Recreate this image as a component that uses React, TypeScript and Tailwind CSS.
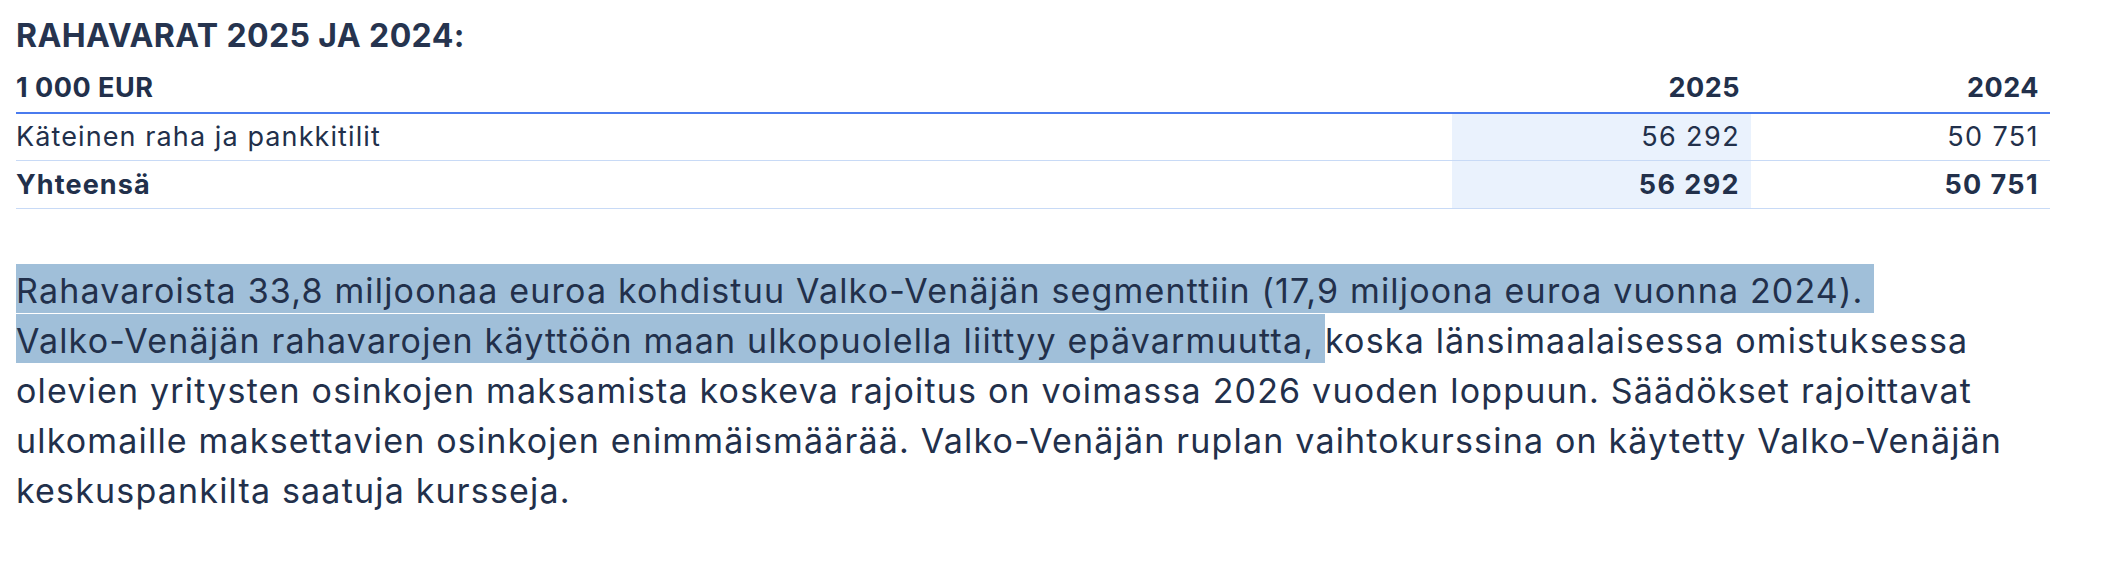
import React from "react";

const HL = "inline-block h-[49px] align-top bg-[#a0bfd9]";
const LINE = "block h-[50px] leading-[53px]";

export default function App() {
  return (
    <div className="w-[2108px] h-[568px] bg-white text-[#22304b] font-[Inter,'Noto_Sans',sans-serif] pl-4 pt-[18px]">
      <h2 className="text-[32px] leading-[36px] font-bold tracking-[0.4px] text-[#26344f]">
        RAHAVARAT 2025 JA 2024:
      </h2>
      <div className="w-[2034px] mt-[18px] tracking-[1.4px]">
        <div className="flex items-end border-b-2 border-[#4a7bee] pb-[8px] text-[27px] leading-[32px] font-bold tracking-[0.5px]">
          <div className="flex-1">1 000 EUR</div>
          <div className="w-[299px] text-right pr-[11px]">2025</div>
          <div className="w-[299px] text-right pr-[11px]">2024</div>
        </div>
        <div className="flex h-[47px] border-b border-[#c8daf6] text-[27px] leading-[46px]">
          <div className="flex-1 tracking-[1.1px]">Käteinen raha ja pankkitilit</div>
          <div className="w-[299px] text-right pr-[11px] bg-[#eaf2fd]">56 292</div>
          <div className="w-[299px] text-right pr-[11px]">50 751</div>
        </div>
        <div className="flex h-[48px] border-b border-[#c8daf6] text-[27px] leading-[47px] font-bold">
          <div className="flex-1 tracking-[1.1px]">Yhteensä</div>
          <div className="w-[299px] text-right pr-[11px] bg-[#eaf2fd]">56 292</div>
          <div className="w-[299px] text-right pr-[11px]">50 751</div>
        </div>
      </div>
      <p className="mt-[55px] text-[34px] tracking-[1.18px] whitespace-nowrap">
        <span className={LINE}>
          <span className={HL}>
            {"Rahavaroista 33,8 miljoonaa euroa kohdistuu Valko-Venäjän segmenttiin (17,9 miljoona euroa vuonna 2024).\u00a0"}
          </span>
        </span>
        <span className={LINE}>
          <span className={HL}>
            {"Valko-Venäjän rahavarojen käyttöön maan ulkopuolella liittyy epävarmuutta,\u00a0"}
          </span>
          koska länsimaalaisessa omistuksessa
        </span>
        <span className={LINE}>
          olevien yritysten osinkojen maksamista koskeva rajoitus on voimassa 2026 vuoden loppuun. Säädökset rajoittavat
        </span>
        <span className={LINE}>
          ulkomaille maksettavien osinkojen enimmäismäärää. Valko-Venäjän ruplan vaihtokurssina on käytetty Valko-Venäjän
        </span>
        <span className={LINE}>keskuspankilta saatuja kursseja.</span>
      </p>
    </div>
  );
}
